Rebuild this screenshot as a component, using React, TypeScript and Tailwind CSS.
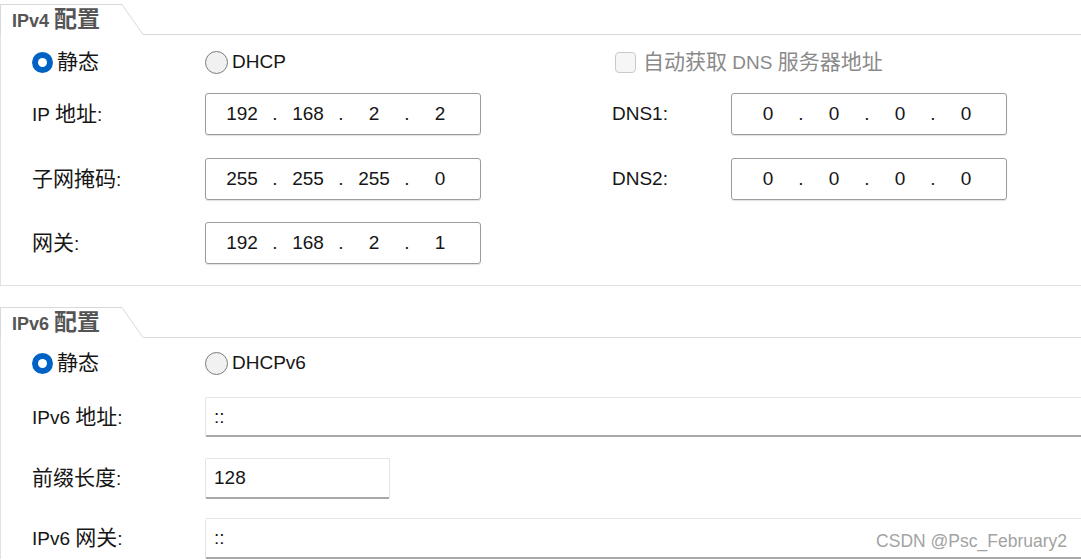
import React from 'react';

const ZH = /([\u3400-\u9fff]+)/;

// CJK glyphs in this dialog render a bit larger than the Latin text
function Txt({ s, zh }: { s: string; zh: string }) {
  return (
    <span className="whitespace-pre">
      {s.split(ZH).map((p, i) =>
        ZH.test(p) ? <span key={i} className={zh}>{p}</span> : <span key={i}>{p}</span>
      )}
    </span>
  );
}

function Radio({ on, label, w }: { on: boolean; label: string; w: string }) {
  return (
    <div className={`flex items-center shrink-0 ${w}`}>
      {on ? (
        <span className="w-[21px] h-[21px] rounded-full bg-[#0062c4] flex items-center justify-center">
          <span className="w-[9px] h-[9px] rounded-full bg-white" />
        </span>
      ) : (
        <span className="w-[23px] h-[23px] rounded-full border-[1.5px] border-[#7c7c7c] bg-[#f1f1f1]" />
      )}
      <span className={on ? 'ml-[4px]' : 'ml-[4px]'}>
        <Txt s={label} zh="text-[21px]" />
      </span>
    </div>
  );
}

function IpBox({ v }: { v: string[] }) {
  return (
    <div className="w-[276px] h-[42px] shrink-0 border-[1.5px] border-[#9c9c9c] rounded-[3px] flex items-center pl-[10px] shadow-[0_1px_1px_rgba(0,0,0,0.12)]">
      {v.map((n, i) => (
        <React.Fragment key={i}>
          {i > 0 && <span className="w-[14px] text-center">.</span>}
          <span className="w-[52px] text-center">{n}</span>
        </React.Fragment>
      ))}
    </div>
  );
}

function Label({ s, w = 'w-[173px]' }: { s: string; w?: string }) {
  return (
    <div className={`${w} shrink-0`}>
      <Txt s={s} zh="text-[21px]" />
    </div>
  );
}

function Header({ title }: { title: string }) {
  return (
    <div className="flex h-[31px]">
      <div className="w-[122px] border-t border-l border-[#d9d9d9] flex items-center pl-[11px] font-bold text-[18px] text-[#555555]">
        <Txt s={title} zh="text-[23px]" />
      </div>
      <svg className="w-[21px] h-[31px]" viewBox="0 0 21 31">
        <line x1="0" y1="0.5" x2="21" y2="30.5" stroke="#d9d9d9" strokeWidth="1" />
      </svg>
      <div className="flex-1 border-b border-[#d9d9d9]" />
    </div>
  );
}

function V6Box({ v, w }: { v: string; w: string }) {
  return (
    <div className={`${w} shrink-0 h-full border-t border-l border-r border-[#e4e4e4] border-b-2 border-b-[#a8a8a8] rounded-[2px] flex items-center pl-[8px]`}>
      {v}
    </div>
  );
}

function App() {
  return (
    <div className="relative w-[1081px] h-[560px] overflow-hidden bg-white pt-[4px] text-[19px] leading-[24px] text-[#161616] font-['Liberation_Sans','Noto_Sans_CJK_SC',sans-serif]">
      {/* IPv4 */}
      <Header title="IPv4 配置" />
      <div className="border-l border-b border-[#e2e2e2] pl-[31px] pt-[15px] pb-[21px]">
        <div className="flex items-center h-[24px]">
          <Radio on label="静态" w="w-[173px]" />
          <Radio on={false} label="DHCP" w="w-[410px]" />
          <div className="flex items-center text-[#8a8a8a]">
            <span className="w-[21px] h-[21px] rounded-[4px] border border-[#c9c9c9] bg-[#f6f6f6]" />
            <span className="ml-[7px]">
              <Txt s="自动获取 DNS 服务器地址" zh="text-[21px]" />
            </span>
          </div>
        </div>
        <div className="flex items-center h-[42px] mt-[19px]">
          <Label s="IP 地址:" />
          <IpBox v={['192', '168', '2', '2']} />
          <div className="w-[131px] shrink-0" />
          <Label s="DNS1:" w="w-[119px]" />
          <IpBox v={['0', '0', '0', '0']} />
        </div>
        <div className="flex items-center h-[42px] mt-[23px]">
          <Label s="子网掩码:" />
          <IpBox v={['255', '255', '255', '0']} />
          <div className="w-[131px] shrink-0" />
          <Label s="DNS2:" w="w-[119px]" />
          <IpBox v={['0', '0', '0', '0']} />
        </div>
        <div className="flex items-center h-[42px] mt-[22px]">
          <Label s="网关:" />
          <IpBox v={['192', '168', '2', '1']} />
        </div>
      </div>

      {/* IPv6 */}
      <div className="mt-[21px]">
        <Header title="IPv6 配置" />
        <div className="border-l border-[#e2e2e2] pl-[31px] pt-[13px]">
          <div className="flex items-center h-[24px]">
            <Radio on label="静态" w="w-[173px]" />
            <Radio on={false} label="DHCPv6" w="w-[300px]" />
          </div>
          <div className="flex items-center h-[40px] mt-[22px]">
            <Label s="IPv6 地址:" />
            <V6Box v="::" w="w-[900px]" />
          </div>
          <div className="flex items-center h-[41px] mt-[21px]">
            <Label s="前缀长度:" />
            <V6Box v="128" w="w-[185px]" />
          </div>
          <div className="flex items-center h-[41px] mt-[19px]">
            <Label s="IPv6 网关:" />
            <V6Box v="::" w="w-[900px]" />
          </div>
        </div>
      </div>

      <div className="absolute right-[14px] top-[530px] text-[17.5px] leading-[22px] text-[#a3a3a3] font-['Liberation_Sans',sans-serif]">
        CSDN @Psc_February2
      </div>
    </div>
  );
}

export default App;
